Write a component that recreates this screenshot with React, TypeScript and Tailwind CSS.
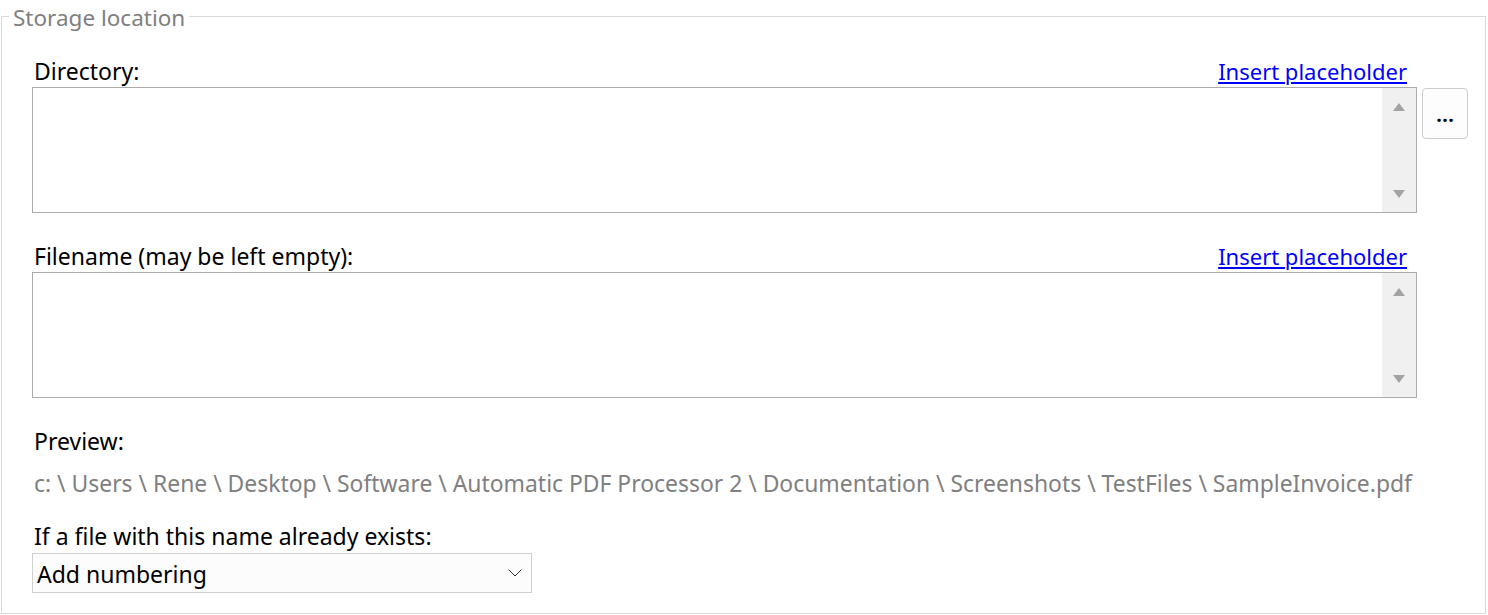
import React from 'react';

const ScrollArrow: React.FC<{ down?: boolean }> = ({ down }) => (
  <svg width="12" height="8" viewBox="0 0 12 8">
    {down ? <path d="M0 0 L12 0 L6 8 Z" fill="#a3a3a3" /> : <path d="M6 0 L12 8 L0 8 Z" fill="#a3a3a3" />}
  </svg>
);

const MultiLineBox: React.FC = () => (
  <div className="w-[1385px] h-[126px] border border-[#ababab] bg-white flex justify-end">
    <div className="w-[34px] h-full bg-[#f0f0f0] flex flex-col items-center justify-between pt-[15px] pb-[14px]">
      <ScrollArrow />
      <ScrollArrow down />
    </div>
  </div>
);

const LabelRow: React.FC<{ label: string; link?: boolean }> = ({ label, link }) => (
  <div className="w-[1385px] h-[31px] flex justify-between items-start leading-[30px] pl-[2px] pr-[10px]">
    <span className="text-black">{label}</span>
    {link && <a className="text-[22px] text-[#0000ff] underline cursor-pointer">Insert placeholder</a>}
  </div>
);

const App: React.FC = () => {
  return (
    <div className="w-[1488px] h-[615px] bg-white overflow-hidden text-[23px] font-['Noto_Sans',sans-serif]">
      <fieldset className="ml-[1px] w-[1485px] h-[614px] border border-[#dadada] p-0 m-0">
        <legend className="ml-[7px] px-[4px] text-[22.5px] leading-[32px] text-[#7f7f7f]">
          <span className="relative top-[2px]">Storage location</span>
        </legend>
        <div className="pl-[30px] pt-[24px]">
          <LabelRow label="Directory:" link />
          <div className="flex items-start">
            <MultiLineBox />
            <button className="ml-[5px] mt-[1px] w-[46px] h-[51px] border border-[#cccccc] rounded-[4px] bg-[#fdfdfd] flex items-center justify-center text-[22px] font-semibold text-black leading-none pb-[2px]">
              ...
            </button>
          </div>

          <div className="mt-[28px]">
            <LabelRow label="Filename (may be left empty):" link />
          </div>
          <MultiLineBox />

          <div className="mt-[28px]">
            <LabelRow label="Preview:" />
          </div>
          <div className="mt-[12px] h-[30px] leading-[30px] pl-[2px] text-[22.9px] text-[#808080] whitespace-nowrap">
            c: \ Users \ Rene \ Desktop \ Software \ Automatic PDF Processor 2 \ Documentation \ Screenshots \ TestFiles \ SampleInvoice.pdf
          </div>

          <div className="mt-[22px]">
            <LabelRow label="If a file with this name already exists:" />
          </div>
          <div className="mt-[1px] w-[500px] h-[40px] border border-[#d0d0d0] bg-[#fcfcfc] flex items-center justify-between pl-[4px] pr-[9px]">
            <span className="text-black pt-[3px]">Add numbering</span>
            <svg width="14" height="8" viewBox="0 0 14 8">
              <path d="M0.5 0.5 L7 7 L13.5 0.5" fill="none" stroke="#333" strokeWidth="1" />
            </svg>
          </div>
        </div>
      </fieldset>
    </div>
  );
};

export default App;
